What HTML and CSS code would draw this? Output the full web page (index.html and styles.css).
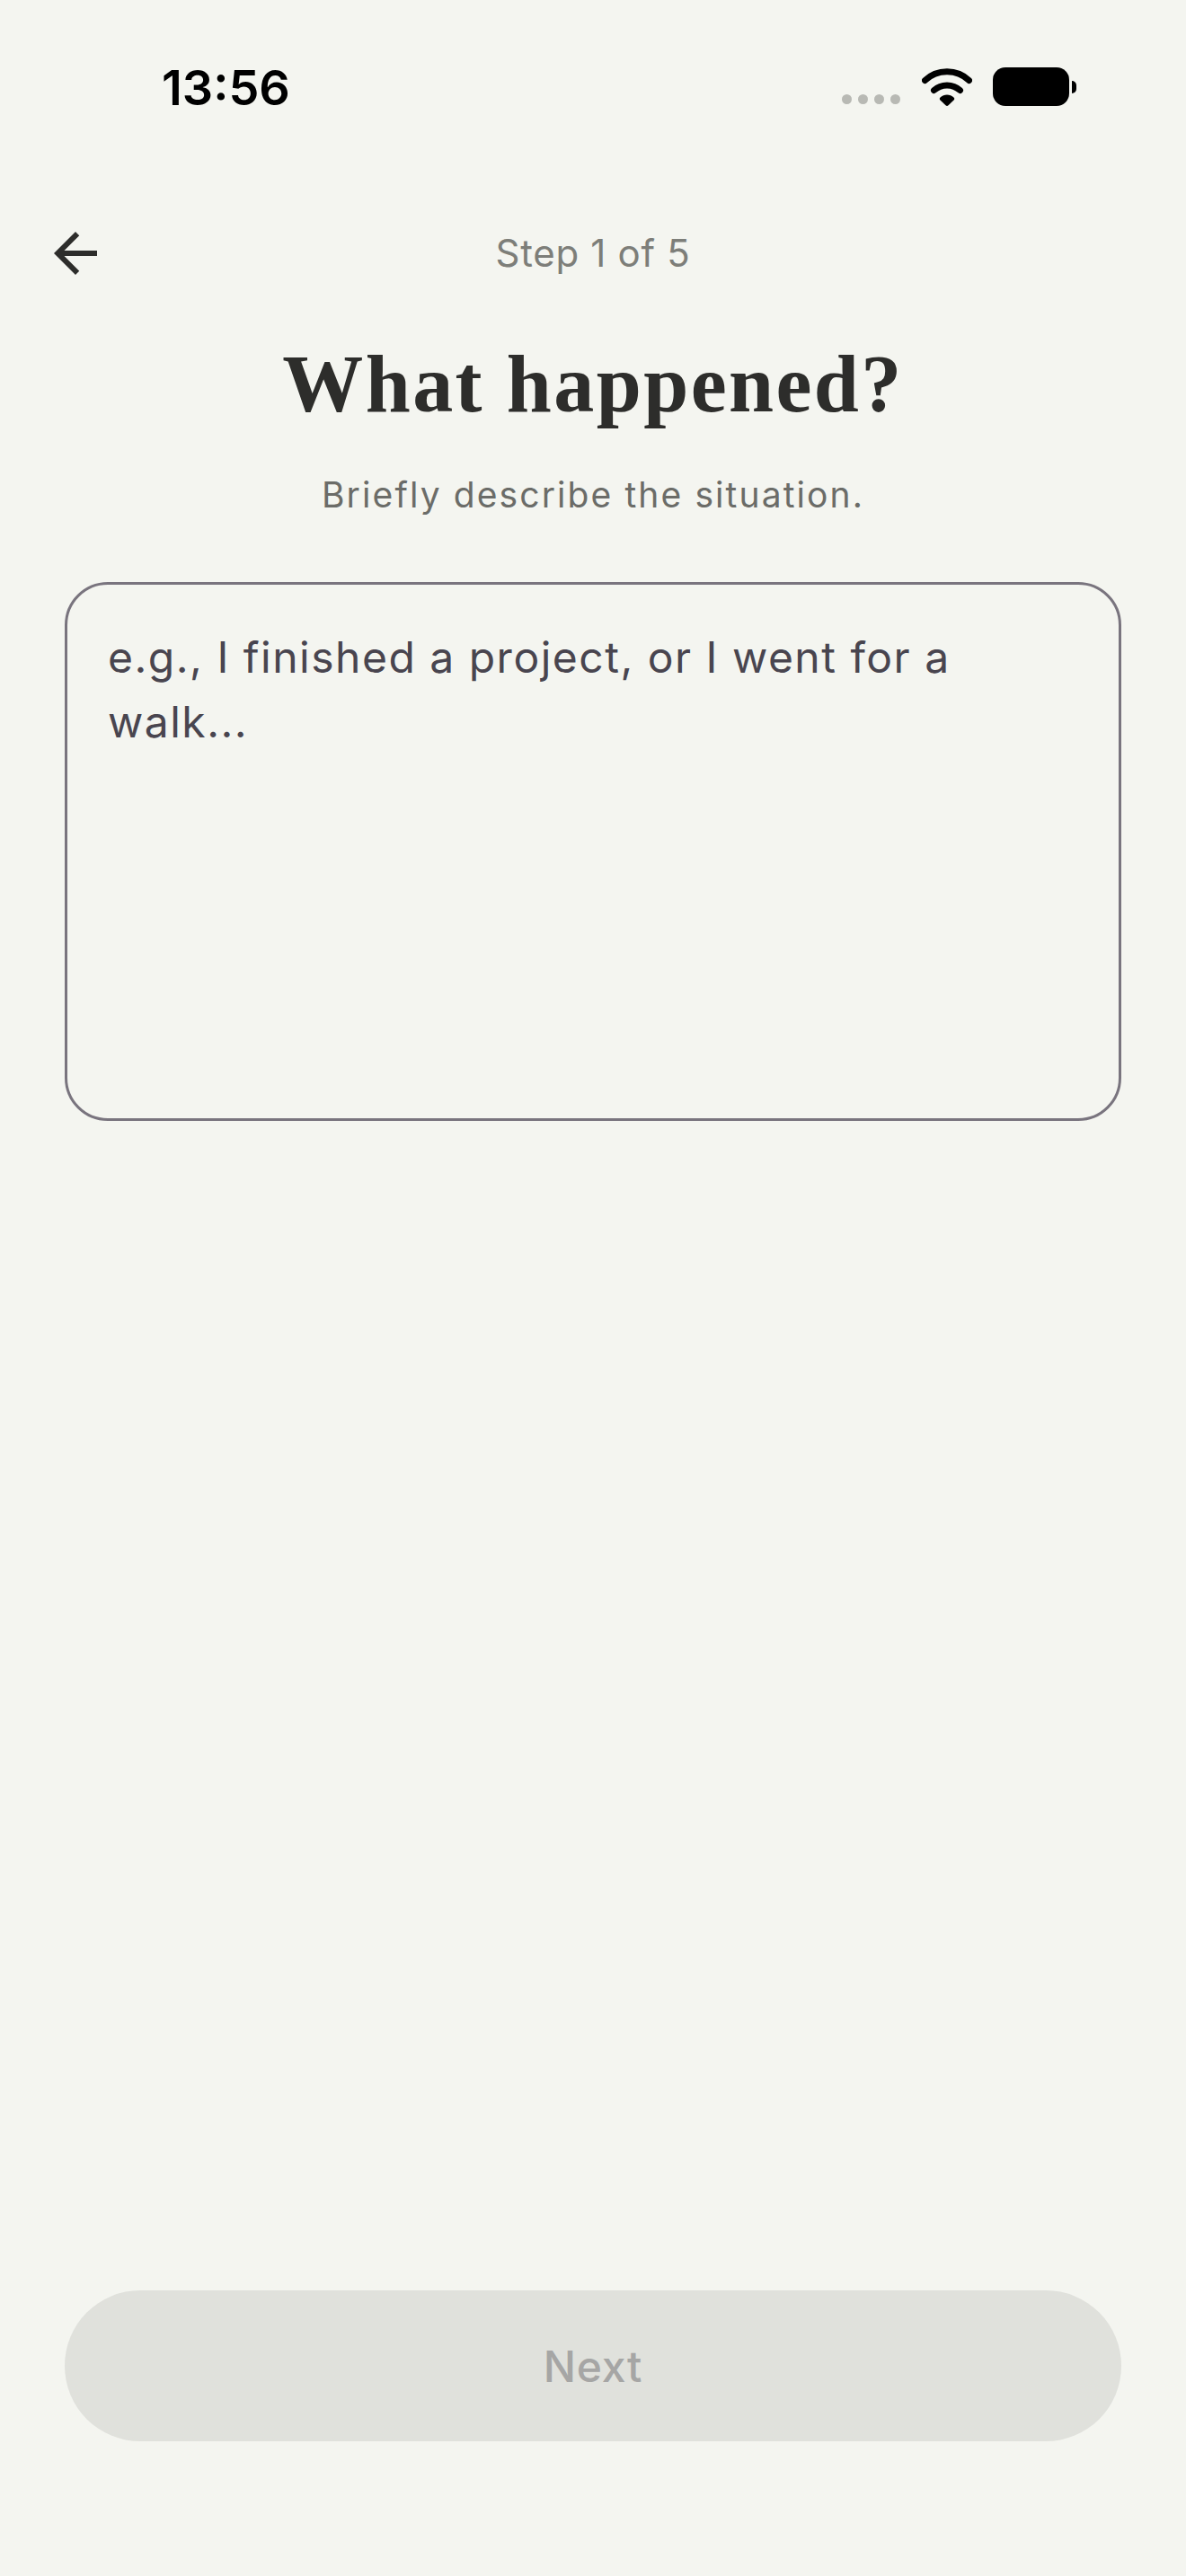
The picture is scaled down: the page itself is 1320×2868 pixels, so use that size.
FILE: index.html
```html
<!DOCTYPE html>
<html lang="en">
<head>
    <meta charset="UTF-8">
    <meta name="viewport" content="width=device-width, initial-scale=1.0">
    <title>What happened?</title>
    <link rel="stylesheet" href="styles.css">
</head>
<body>
    <!-- Status bar -->
    <div class="status-bar">
        <span class="time">13:56</span>
        <div class="status-icons">
            <div class="signal">
                <span class="dot"></span>
                <span class="dot"></span>
                <span class="dot"></span>
                <span class="dot"></span>
            </div>
            <svg class="wifi" width="56" height="43" viewBox="0 0 56 43">
                <path d="M3.5 14.5C17 1.5 39 1.5 52.5 14.5" fill="none" stroke="#000" stroke-width="7" stroke-linecap="round"/>
                <path d="M13.5 25.5C21.5 18 34.5 18 42.5 25.5" fill="none" stroke="#000" stroke-width="7" stroke-linecap="round"/>
                <path d="M20.5 33.5C24.5 29.5 31.5 29.5 35.5 33.5C36.5 34.5 36.5 35.5 35.5 36.5L29.5 42.3C28.6 43.1 27.4 43.1 26.5 42.3L20.5 36.5C19.5 35.5 19.5 34.5 20.5 33.5Z" fill="#000"/>
            </svg>
            <div class="battery">
                <div class="battery-body"></div>
                <div class="battery-nub"></div>
            </div>
        </div>
    </div>

    <!-- Top bar -->
    <div class="top-bar">
        <button class="back-btn">
            <svg width="72" height="72" viewBox="0 0 24 24">
                <path d="M20 11H7.83l5.59-5.59L12 4l-8 8 8 8 1.41-1.41L7.83 13H20v-2z" fill="#2d2d2b"/>
            </svg>
        </button>
        <span class="step">Step 1 of 5</span>
    </div>

    <div class="content">
        <h1>What happened?</h1>
        <p class="subtitle">Briefly describe the situation.</p>
        <div class="text-box">e.g., I finished a project, or I went for a walk...</div>
    </div>

    <button class="next-btn">Next</button>
</body>
</html>
```

FILE: styles.css
```css
body {
    font-family: 'Inter', sans-serif;
    margin: 0;
    width: 1320px;
    height: 2868px;
    background-color: #f4f5f0;
    display: flex;
    flex-direction: column;
    overflow: hidden;
}

.status-bar {
    height: 196px;
    box-sizing: border-box;
    padding: 65px 122px 0 180px;
    display: flex;
    justify-content: space-between;
    align-items: flex-start;
}

.time {
    font-size: 54px;
    font-weight: 600;
    line-height: 66px;
    color: #000;
}

.status-icons {
    display: flex;
    align-items: flex-start;
    padding-top: 10px;
}

.signal {
    display: flex;
    gap: 7px;
    margin-top: 30px;
    margin-right: 24px;
}

.dot {
    width: 11px;
    height: 11px;
    border-radius: 50%;
    background-color: #b8b9b4;
}

.wifi {
    display: block;
    margin-right: 23px;
}

.battery {
    display: flex;
    align-items: center;
    gap: 3px;
}

.battery-body {
    width: 85px;
    height: 43px;
    background-color: #000;
    border-radius: 14px;
}

.battery-nub {
    width: 5px;
    height: 14px;
    background-color: #000;
    border-radius: 0 7px 7px 0;
}

.top-bar {
    height: 180px;
    position: relative;
    display: flex;
    justify-content: center;
    align-items: flex-start;
    padding-top: 50px;
    box-sizing: border-box;
}

.back-btn {
    position: absolute;
    left: 48px;
    top: 50px;
    width: 72px;
    height: 72px;
    padding: 0;
    border: none;
    background: none;
}

.back-btn svg {
    display: block;
}

.step {
    font-size: 42px;
    line-height: 72px;
    letter-spacing: 0.7px;
    color: #7d7e79;
}

.content {
    flex: 1;
    padding: 0 72px;
    text-align: center;
}

h1 {
    font-family: 'Liberation Serif', serif;
    font-size: 90px;
    font-weight: 700;
    line-height: 104px;
    letter-spacing: 2.4px;
    color: #2d2d2b;
    margin: 0;
}

.subtitle {
    font-size: 39px;
    line-height: 56px;
    letter-spacing: 2.1px;
    color: #6b6c68;
    margin: 43px 0 69px;
}

.text-box {
    height: 600px;
    box-sizing: border-box;
    padding: 45px 45px;
    border: 3px solid #79747e;
    border-radius: 48px;
    font-size: 48px;
    line-height: 72px;
    letter-spacing: 1.5px;
    color: #49454f;
    text-align: left;
}

.next-btn {
    display: block;
    width: 1176px;
    height: 168px;
    margin: 0 72px 150px;
    border: none;
    border-radius: 84px;
    background-color: #e0e1dc;
    color: #a6a6a5;
    font-family: 'Inter', sans-serif;
    font-size: 48px;
    font-weight: 500;
    letter-spacing: 0.75px;
}
```
